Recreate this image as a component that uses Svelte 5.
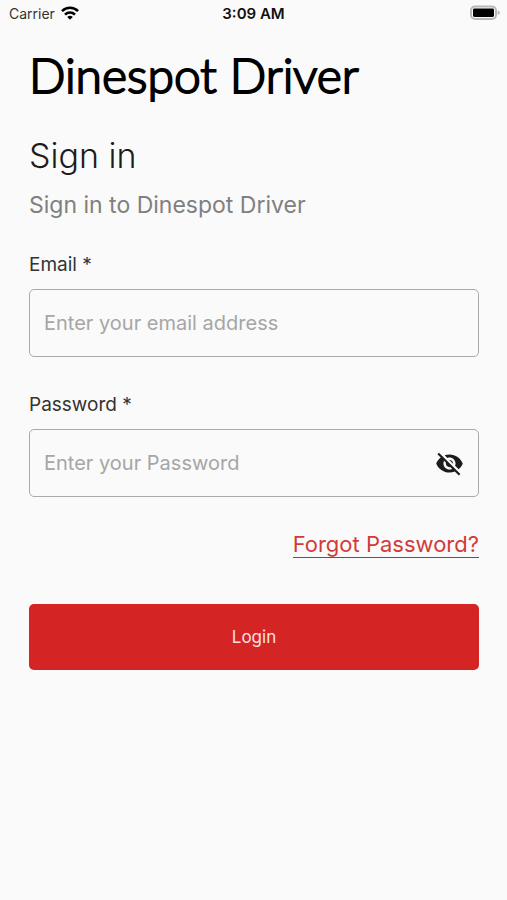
<script>
  let email = $state('');
  let password = $state('');
  let visible = $state(false);
</script>

<div class="screen">
  <header class="status">
    <div class="carrier">
      <span>Carrier</span>
      <svg width="18" height="14" viewBox="0 0 18 14" aria-hidden="true">
        <g fill="none" stroke="#000" stroke-width="2.6">
          <path d="M1 5.1a11.4 11.4 0 0 1 16 0" />
          <path d="M4 8.6a7.1 7.1 0 0 1 10 0" />
        </g>
        <path d="M9 13.8 6.2 11a4 4 0 0 1 5.6 0z" fill="#000" />
      </svg>
    </div>
    <time>3:09 AM</time>
    <div class="power">
      <svg width="32" height="16" viewBox="0 0 32 16" aria-hidden="true">
        <rect x="2" y="1.5" width="25" height="12.5" rx="4" fill="#fafafa" stroke="#b8b8b8" stroke-width="2" />
        <rect x="4" y="3.6" width="21" height="8.4" rx="1.4" fill="#000" />
        <path d="M28.6 5.4q2.4 .8 2.4 2.3t-2.4 2.3z" fill="#b8b8b8" />
      </svg>
    </div>
  </header>

  <main>
    <div class="brand">Dinespot Driver</div>
    <h1>Sign in</h1>
    <p class="intro">Sign in to Dinespot Driver</p>

    <form onsubmit={(e) => e.preventDefault()}>
      <label for="email">Email *</label>
      <div class="field">
        <input id="email" type="email" placeholder="Enter your email address" bind:value={email} />
      </div>

      <label for="password">Password *</label>
      <div class="field">
        <input
          id="password"
          type={visible ? 'text' : 'password'}
          placeholder="Enter your Password"
          bind:value={password}
        />
        <button class="eye" type="button" aria-label="Toggle password visibility" onclick={() => (visible = !visible)}>
          <svg width="29" height="29" viewBox="0 0 24 24" aria-hidden="true">
            <path
              fill="#1c1c1c"
              d="M12 7c2.76 0 5 2.24 5 5 0 .65-.13 1.26-.36 1.83l2.92 2.92c1.51-1.26 2.7-2.89 3.43-4.75-1.73-4.39-6-7.5-11-7.5-1.4 0-2.74.25-3.98.7l2.16 2.16C10.74 7.13 11.35 7 12 7zM2 4.27l2.28 2.28.46.46C3.08 8.3 1.78 10.02 1 12c1.73 4.39 6 7.5 11 7.5 1.55 0 3.03-.3 4.38-.84l.42.42L19.73 22 21 20.73 3.27 3 2 4.27zM7.53 9.8l1.55 1.55c-.05.21-.08.43-.08.65 0 1.66 1.34 3 3 3 .22 0 .44-.03.65-.08l1.55 1.55c-.67.33-1.41.53-2.2.53-2.76 0-5-2.24-5-5 0-.79.2-1.53.53-2.2zm4.31-.78l3.15 3.15.02-.16c0-1.66-1.34-3-3-3l-.17.01z"
            />
          </svg>
        </button>
      </div>

      <div class="forgot"><a href="#forgot">Forgot Password?</a></div>
      <button class="login" type="submit">Login</button>
    </form>
  </main>
</div>

<style>
  :global(body) {
    margin: 0;
    background: #fafafa;
  }
  .screen {
    min-height: 100vh;
    background: #fafafa;
    color: #1c1c1c;
    font-family: Inter, 'Liberation Sans', sans-serif;
  }
  .status {
    display: grid;
    grid-template-columns: 1fr auto 1fr;
    align-items: center;
    height: 26px;
    padding: 0 6px;
    font-size: 14px;
  }
  .carrier {
    display: flex;
    align-items: center;
    gap: 6px;
    padding-left: 3px;
    color: #333;
  }
  time {
    font-size: 15px;
    font-weight: 600;
    color: #111;
  }
  .power {
    display: flex;
    justify-content: flex-end;
  }
  main {
    padding: 22px 28px 0 29px;
  }
  .brand {
    font-family: Lato, sans-serif;
    font-size: 48px;
    font-weight: 300;
    line-height: 54px;
    color: #000;
    white-space: nowrap;
    -webkit-text-stroke: 2px #000;
    stroke-linejoin: round;
  }
  h1 {
    margin: 34px 0 0;
    font-size: 34px;
    font-weight: 300;
    line-height: 40px;
  }
  .intro {
    margin: 15px 0 0;
    font-size: 23px;
    line-height: 28px;
    color: #808080;
  }
  form {
    display: flex;
    flex-direction: column;
    padding-top: 34px;
  }
  label {
    font-size: 19px;
    line-height: 24px;
    color: #333;
  }
  .field {
    display: flex;
    align-items: center;
    box-sizing: border-box;
    height: 68px;
    margin: 12px 0 36px;
    padding: 0 14px;
    border: 1px solid #aaa;
    border-radius: 5px;
  }
  input {
    flex: 1;
    min-width: 0;
    padding: 0;
    border: 0;
    outline: 0;
    background: none;
    font: inherit;
    font-size: 20px;
    line-height: 28px;
    color: #1c1c1c;
  }
  input::placeholder {
    color: #a6a6a6;
    opacity: 1;
  }
  .eye {
    display: flex;
    padding: 0;
    border: 0;
    background: none;
  }
  .forgot {
    display: flex;
    justify-content: flex-end;
    margin-top: -2px;
  }
  a {
    border-bottom: 1px solid #d32424;
    font-size: 22px;
    line-height: 26px;
    color: #d33a3a;
    text-decoration: none;
  }
  .login {
    height: 66px;
    margin-top: 46px;
    border: 0;
    border-radius: 5px;
    background: #d42424;
    font: inherit;
    font-size: 17px;
    color: #fbe0e0;
  }
</style>
